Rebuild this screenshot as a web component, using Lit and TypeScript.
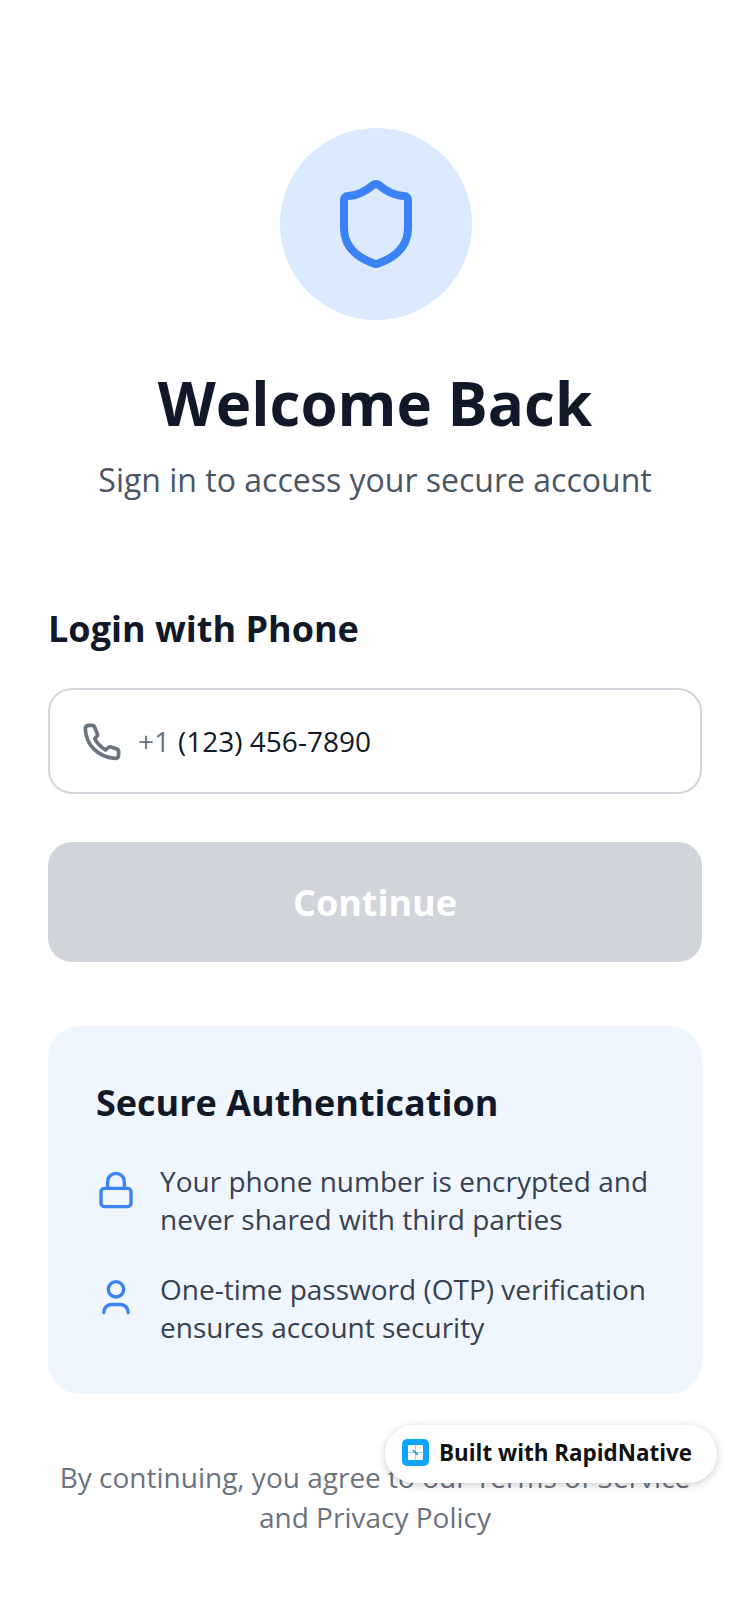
import {LitElement, css, html} from 'lit';
import {customElement} from 'lit/decorators.js';

@customElement('app-root')
export class AppRoot extends LitElement {
  static styles = css`
    :host {
      display: block;
      position: relative;
      height: 1624px;
      background: #fff;
      font-family: 'Open Sans', sans-serif;
      color: #111827;
      overflow: hidden;
    }
    .page {
      display: flex;
      flex-direction: column;
      padding: 128px 48px 0;
    }
    .hero {
      display: flex;
      flex-direction: column;
      align-items: center;
    }
    .circle {
      width: 192px;
      height: 192px;
      margin-left: 2px;
      border-radius: 50%;
      background: #dbeafe;
      display: flex;
      align-items: center;
      justify-content: center;
    }
    h1 {
      margin: 39px 0 0;
      font-size: 60px;
      line-height: 88px;
      font-weight: 700;
    }
    .sub {
      margin: 9px 0 0;
      font-size: 32px;
      line-height: 48px;
      color: #4b5563;
    }
    .label {
      margin: 101px 0 0;
      font-size: 36px;
      line-height: 48px;
      font-weight: 700;
    }
    .field {
      margin-top: 35px;
      height: 106px;
      box-sizing: border-box;
      border: 2px solid #d1d5db;
      border-radius: 24px;
      display: flex;
      align-items: center;
      padding: 0 28px;
      font-size: 28px;
    }
    .field svg {
      flex: none;
      margin-top: 2px;
    }
    .prefix {
      margin-left: 10px;
      color: #6b7280;
    }
    .number {
      margin-left: 8px;
    }
    .btn {
      margin-top: 48px;
      height: 120px;
      border-radius: 24px;
      background: #d1d5db;
      color: #fff;
      font-size: 36px;
      font-weight: 700;
      display: flex;
      align-items: center;
      justify-content: center;
    }
    .card {
      margin-top: 64px;
      height: 368px;
      box-sizing: border-box;
      border-radius: 32px;
      background: #eff6ff;
      padding: 49px 48px 0;
    }
    .card h2 {
      margin: 0;
      font-size: 36px;
      line-height: 56px;
      font-weight: 700;
    }
    .rows {
      display: flex;
      flex-direction: column;
      gap: 32px;
      margin-top: 31px;
    }
    .row {
      display: flex;
      gap: 24px;
      font-size: 28px;
      line-height: 38px;
      color: #374151;
    }
    .row svg {
      flex: none;
      margin-top: 8px;
    }
    .terms {
      margin: 63px 0 0;
      text-align: center;
      font-size: 28px;
      line-height: 40px;
      color: #6b7280;
    }
    .badge {
      position: absolute;
      left: 385px;
      top: 1425px;
      width: 332px;
      height: 58px;
      box-sizing: border-box;
      border-radius: 29px;
      background: #fff;
      box-shadow: 0 2px 10px rgba(0, 0, 0, 0.2);
      display: flex;
      align-items: center;
      gap: 10px;
      padding: 0 0 4px 17px;
      font-size: 22.4px;
      font-weight: 700;
      color: #111;
    }
  `;

  render() {
    return html`<div class="page">
        <div class="hero">
          <div class="circle">
            <svg width="96" height="96" viewBox="0 0 24 24" fill="none" stroke="#3b82f6" stroke-width="2" stroke-linecap="round" stroke-linejoin="round">
              <path d="M20 13c0 5-3.5 7.5-7.66 8.95a1 1 0 0 1-.67-.01C7.5 20.5 4 18 4 13V6a1 1 0 0 1 1-1c2 0 4.5-1.2 6.24-2.72a1.17 1.17 0 0 1 1.52 0C14.51 3.81 17 5 19 5a1 1 0 0 1 1 1z" />
            </svg>
          </div>
          <h1>Welcome Back</h1>
          <p class="sub">Sign in to access your secure account</p>
        </div>
        <p class="label">Login with Phone</p>
        <div class="field">
          <svg width="50" height="50" viewBox="0 0 150 150" fill="none" stroke="#6b7280" stroke-width="11" stroke-linecap="round" stroke-linejoin="round">
            <path d="M32 25H42Q48 25 50 31L58 50Q60 56 55 60L50 65Q60 85 83 99L89 93Q93 89 99 90L116 96Q122 98 122 105V113Q122 124 110 124C60 120 24 84 22 36Q22 25 32 25Z" />
          </svg>
          <span class="prefix">+1</span><span class="number">(123) 456-7890</span>
        </div>
        <div class="btn">Continue</div>
        <div class="card">
          <h2>Secure Authentication</h2>
          <div class="rows">
            <div class="row">
              <svg width="40" height="40" viewBox="0 0 24 24" fill="none" stroke="#3b82f6" stroke-width="2" stroke-linecap="round" stroke-linejoin="round">
                <rect x="3" y="11" width="18" height="11" rx="2" />
                <path d="M7 11V7a5 5 0 0 1 10 0v4" />
              </svg>
              <span>Your phone number is encrypted and<br />never shared with third parties</span>
            </div>
            <div class="row">
              <svg width="40" height="40" viewBox="0 0 24 24" fill="none" stroke="#3b82f6" stroke-width="2" stroke-linecap="round" stroke-linejoin="round">
                <circle cx="12" cy="6.8" r="4.6" />
                <path d="M4.7 20.7v-.3a4.5 4.5 0 0 1 4.5-4.5h5.6a4.5 4.5 0 0 1 4.5 4.5v.3" />
              </svg>
              <span>One-time password (OTP) verification<br />ensures account security</span>
            </div>
          </div>
        </div>
        <p class="terms">By continuing, you agree to our Terms of Service<br />and Privacy Policy</p>
      </div>
      <div class="badge">
        <svg width="27" height="27" viewBox="0 0 27 27">
          <rect width="27" height="27" rx="5" fill="#0ea5ff" />
          <rect x="6" y="6" width="15" height="15" rx="1" fill="#fff" />
          <path d="M13.5 6V21M6 13.5H21" stroke="#8fd2ff" stroke-width="1" />
          <path d="M11 11L16 16" stroke="#1d8fdc" stroke-width="1.6" />
        </svg>
        <span>Built with RapidNative</span>
      </div>`;
  }
}
